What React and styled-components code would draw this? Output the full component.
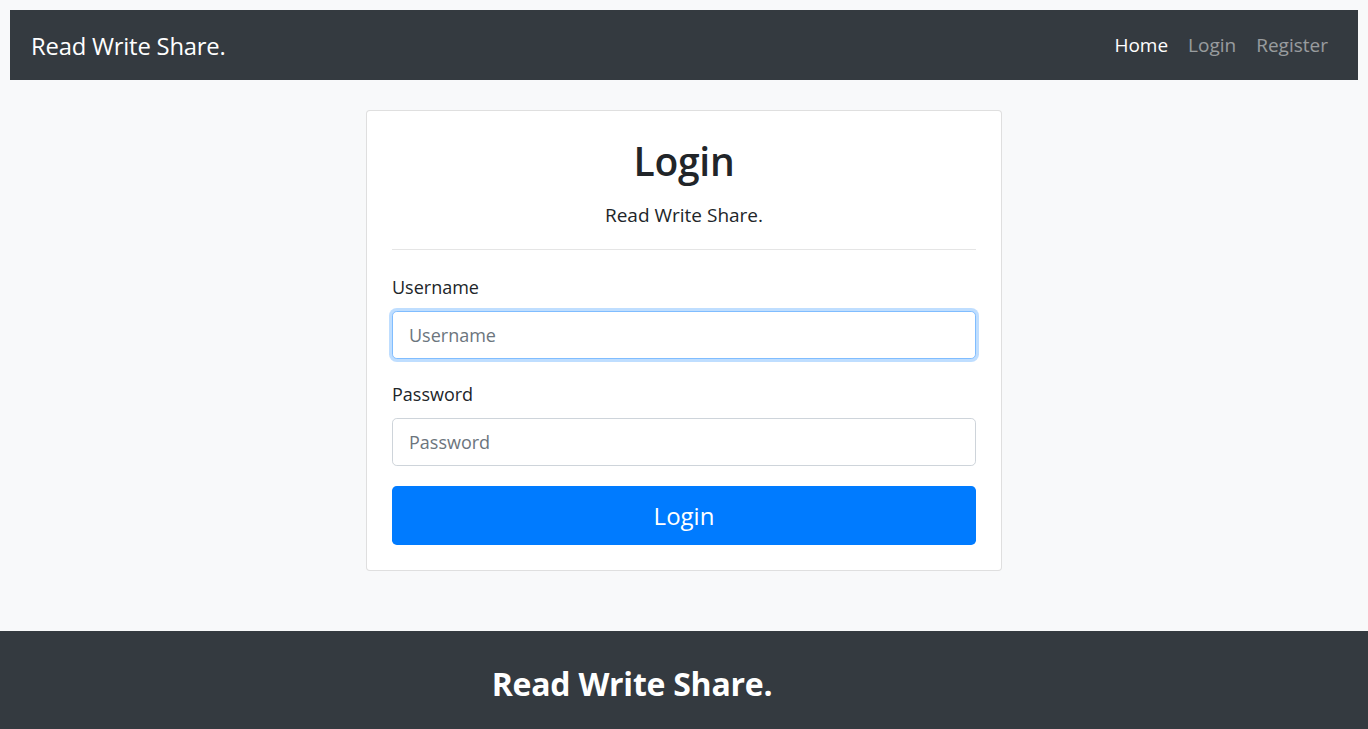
import React from 'react';
import styled, { createGlobalStyle } from 'styled-components';

const GlobalStyle = createGlobalStyle`
  * { box-sizing: border-box; }
  body {
    margin: 0;
    background-color: #f8f9fa;
    font-family: "Open Sans", "Noto Sans", sans-serif;
    color: #212529;
  }
`;

const Page = styled.div`
  min-height: 100vh;
  display: flex;
  flex-direction: column;
`;

const NavWrap = styled.div`
  padding: 10px 10px 0;
`;

const Navbar = styled.nav`
  height: 70px;
  background-color: #343a40;
  display: flex;
  align-items: center;
  justify-content: space-between;
  padding: 0 22px 0 21px;
`;

const Brand = styled.a`
  color: #fff;
  font-size: 23.8px;
  text-decoration: none;
  letter-spacing: -0.2px;
  padding-top: 2px;
`;

const NavLinks = styled.div`
  display: flex;
  align-items: center;
`;

const NavLink = styled.a`
  color: ${(p) => (p.active ? '#fff' : 'rgba(255,255,255,0.5)')};
  font-size: 19px;
  padding: 0 8px;
  text-decoration: none;
  margin-left: 4px;
`;

const Main = styled.main`
  display: flex;
  justify-content: center;
  padding: 30px 0 60px;
`;

const Card = styled.div`
  width: 636px;
  background: #fff;
  border: 1px solid rgba(0, 0, 0, 0.125);
  border-radius: 4px;
  padding: 26px 25px 25px;
`;

const Title = styled.h1`
  margin: 0;
  text-align: center;
  font-size: 39px;
  font-weight: 600;
  line-height: 48px;
  letter-spacing: -0.3px;
`;

const Subtitle = styled.p`
  margin: 16px 0 0;
  text-align: center;
  font-size: 19px;
  line-height: 28px;
`;

const Divider = styled.hr`
  border: 0;
  border-top: 1px solid rgba(0, 0, 0, 0.1);
  margin: 20px 0 23px;
`;

const Field = styled.div`
  margin-bottom: ${(p) => p.gap}px;
`;

const Label = styled.label`
  display: block;
  font-size: 18px;
  line-height: 28px;
  margin-bottom: 10px;
`;

const Input = styled.input`
  display: block;
  width: 100%;
  height: 48px;
  padding: 0 16px;
  font-family: inherit;
  font-size: 18px;
  color: #495057;
  background: #fff;
  border: 1px solid ${(p) => (p.focused ? '#80bdff' : '#ced4da')};
  border-radius: 4.8px;
  outline: none;
  box-shadow: ${(p) => (p.focused ? '0 0 0 3px rgba(0,123,255,0.25)' : 'none')};
  &::placeholder { color: #6c757d; }
`;

const Button = styled.button`
  display: block;
  width: 100%;
  height: 59px;
  border: 0;
  border-radius: 4.8px;
  background: #007bff;
  color: #fff;
  font-family: inherit;
  font-size: 24px;
`;

const Footer = styled.footer`
  margin-top: auto;
  background-color: #343a40;
  padding: 34px 0 30px;
`;

const FooterTitle = styled.h2`
  margin: 0 0 0 352px;
  width: 560px;
  text-align: center;
  color: #fff;
  font-size: 32px;
  font-weight: 700;
  line-height: 38px;
  letter-spacing: -0.25px;
`;

export default function App() {
  return (
    <Page>
      <GlobalStyle />
      <NavWrap>
        <Navbar>
          <Brand href="#">Read Write Share.</Brand>
          <NavLinks>
            <NavLink href="#" active>Home</NavLink>
            <NavLink href="#">Login</NavLink>
            <NavLink href="#">Register</NavLink>
          </NavLinks>
        </Navbar>
      </NavWrap>

      <Main>
        <Card>
          <Title>Login</Title>
          <Subtitle>Read Write Share.</Subtitle>
          <Divider />
          <Field gap={21}>
            <Label>Username</Label>
            <Input focused placeholder="Username" />
          </Field>
          <Field gap={20}>
            <Label>Password</Label>
            <Input type="password" placeholder="Password" />
          </Field>
          <Button>Login</Button>
        </Card>
      </Main>

      <Footer>
        <FooterTitle>Read Write Share.</FooterTitle>
      </Footer>
    </Page>
  );
}
